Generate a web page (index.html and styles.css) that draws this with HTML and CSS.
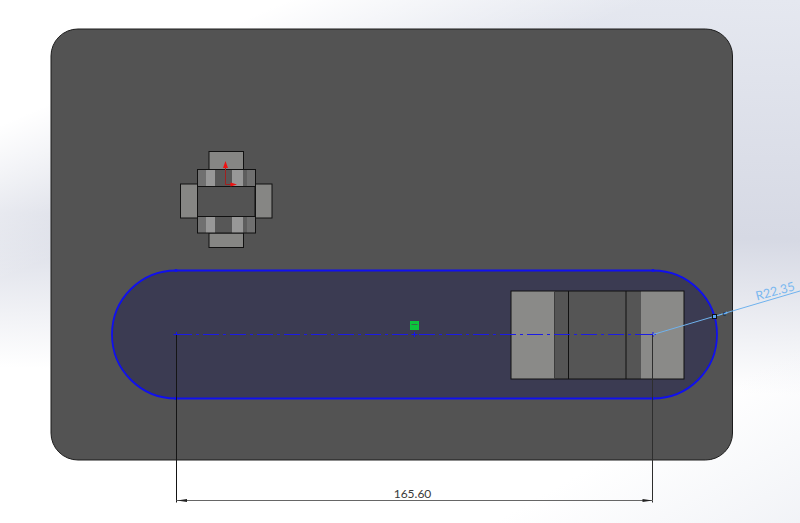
FILE: index.html
```html
<!DOCTYPE html>
<html lang="en">
<head>
    <meta charset="UTF-8">
    <meta name="viewport" content="width=device-width, initial-scale=1.0">
    <title>Sketch</title>
    <link rel="stylesheet" href="styles.css">
</head>
<body>
    <svg class="canvas" width="800" height="523" viewBox="0 0 800 523">
        <!-- plate -->
        <rect class="plate" x="51" y="29" width="681.500" height="431" rx="27"/>

        <!-- small part -->
        <rect class="tab" x="209" y="151.500" width="34.500" height="18"/>
        <rect class="tab" x="209" y="233" width="34.500" height="14.500"/>
        <rect class="tab" x="180.500" y="184" width="17" height="34"/>
        <rect class="tab" x="255" y="184" width="17" height="34"/>
        <g>
            <rect class="band-mid" x="198" y="170" width="8" height="16"/>
            <rect class="band-light" x="206" y="170" width="9" height="16"/>
            <rect class="band-dark" x="215" y="170" width="17" height="16"/>
            <rect class="band-light" x="232" y="170" width="11" height="16"/>
            <rect class="band-shade" x="243" y="170" width="4" height="16"/>
            <rect class="band-mid" x="247" y="170" width="8" height="16"/>
            <rect class="band-mid" x="198" y="217" width="8" height="16"/>
            <rect class="band-light" x="206" y="217" width="9" height="16"/>
            <rect class="band-dark" x="215" y="217" width="17" height="16"/>
            <rect class="band-light" x="232" y="217" width="11" height="16"/>
            <rect class="band-shade" x="243" y="217" width="4" height="16"/>
            <rect class="band-mid" x="247" y="217" width="8" height="16"/>
            <rect class="outline" x="197.500" y="169.500" width="58" height="63.500"/>
            <line class="edge" x1="197.500" y1="186.500" x2="255.500" y2="186.500"/>
            <line class="edge" x1="197.500" y1="216.500" x2="255.500" y2="216.500"/>
        </g>

        <!-- origin -->
        <path class="origin-line" d="M225.500 166V184.500H232"/>
        <path class="origin-head" d="M225.500 161l2.500 7h-5zM237 184.500l-6.500 2v-4z"/>

        <!-- slot -->
        <path class="slot" d="M176 270.500H653A64 64 0 0 1 653 398.500H176A64 64 0 0 1 176 270.500Z"/>

        <!-- block in the slot -->
        <rect class="block-light" x="511" y="291" width="173" height="88"/>
        <rect class="block-dark" x="554" y="291" width="87" height="88"/>
        <rect class="outline" x="511" y="291" width="173" height="88"/>
        <line class="edge-soft" x1="554.500" y1="291" x2="554.500" y2="379"/>
        <line class="edge" x1="568.500" y1="291" x2="568.500" y2="379"/>
        <line class="edge" x1="626" y1="291" x2="626" y2="379"/>

        <!-- slot again, the outline lies on top -->
        <path class="slot-line" d="M176 270.500H653A64 64 0 0 1 653 398.500H176A64 64 0 0 1 176 270.500Z"/>
        <line class="center-line" x1="176" y1="334.500" x2="653" y2="334.500"/>
        <path class="tick" d="M173.500 334.500h6M176.500 332v5M411.500 334.500h6M414.500 332v5M650 334.500h6M653 332v5"/>
        <circle class="dot" cx="176" cy="270.500" r="1.500"/>
        <circle class="dot" cx="653" cy="270.500" r="1.500"/>
        <circle class="dot" cx="176" cy="398.500" r="1.500"/>
        <circle class="dot" cx="653" cy="398.500" r="1.500"/>

        <!-- relation marker -->
        <rect class="relation" x="410" y="321" width="9" height="9"/>
        <line class="relation-bar" x1="411.500" y1="324.500" x2="417.500" y2="324.500"/>

        <!-- width dimension -->
        <line class="dim" x1="176.500" y1="335" x2="176.500" y2="502.500"/>
        <line class="dim-right" x1="652.500" y1="335" x2="652.500" y2="502.500"/>
        <line class="dim-thin" x1="176.500" y1="500.500" x2="653" y2="500.500"/>
        <path class="arrow" d="M177 500.500l10-1.500v3zM652.500 500.500l-10-1.500v3z"/>
        <text class="dim-text" x="412.500" y="498" text-anchor="middle">165.60</text>

        <!-- radius dimension -->
        <path class="radius-line" d="M653 334.500L800 291"/>
        <path class="radius-arrow" d="M715 316.500l12-5 .5 2z"/>
        <rect class="handle" x="712.500" y="314.500" width="4" height="4"/>
        <text class="radius-text" transform="translate(757 300.500) rotate(-15)">R22.35</text>
        <text class="radius-mark" x="722.500" y="315.500">c</text>
    </svg>
</body>
</html>
```

FILE: styles.css
```css
html, body {
    margin: 0;
    padding: 0;
}

body {
    width: 800px;
    height: 523px;
    overflow: hidden;
    background:
        linear-gradient(156.6deg, #ffffff 115px, rgba(255, 255, 255, 0) 258px),
        linear-gradient(150deg, rgba(238, 240, 245, 0) 82%, rgba(238, 240, 245, 0.8) 100%),
        linear-gradient(182deg, #e5e8f0 0, #d6d9e4 240px, #ffffff 395px);
}

.canvas {
    display: block;
}

.plate {
    fill: #535353;
    stroke: #1c1c1c;
    stroke-width: 1;
}

.tab {
    fill: #868684;
    stroke: #111;
    stroke-width: 1;
}

.band-light { fill: #989898; }
.band-dark { fill: #575757; }
.band-mid { fill: #707070; }
.band-shade { fill: #5e5e5e; }

.outline {
    fill: none;
    stroke: #111;
    stroke-width: 1;
}

.edge {
    stroke: #111;
    stroke-width: 1;
}

.edge-soft {
    stroke: #3c3c3c;
    stroke-width: 1;
}

.origin-line {
    fill: none;
    stroke: #a02020;
    stroke-width: 1;
}

.origin-head {
    fill: #f01010;
}

.slot {
    fill: #3b3b52;
}

.slot-line {
    fill: none;
    stroke: #1010ee;
    stroke-width: 1.800;
}

.block-light { fill: #8a8a88; }
.block-dark { fill: #555; }

.center-line {
    stroke: #1c1ce4;
    stroke-width: 1;
    stroke-dasharray: 16 4 3 4;
}

.tick {
    fill: none;
    stroke: #1414f0;
    stroke-width: 1;
}

.dot { fill: #1010ee; }

.relation { fill: #0cc53c; }

.relation-bar {
    stroke: #3b6a4b;
    stroke-width: 1;
}

.dim {
    stroke: #151515;
    stroke-width: 1;
}

.dim-right {
    stroke: #2e2e2e;
    stroke-width: 1;
}

.dim-thin {
    stroke: #666;
    stroke-width: 1;
}

.arrow { fill: #222; }

.dim-text {
    font-family: "Lato", "Liberation Sans", sans-serif;
    font-size: 12px;
    fill: #3a3a3a;
}

.radius-line {
    fill: none;
    stroke: #6fb2ee;
    stroke-width: 1;
}

.radius-arrow { fill: #6fb2ee; }

.handle {
    fill: #5aa8f5;
    stroke: #111;
    stroke-width: 1;
}

.radius-text {
    font-family: "Lato", "Liberation Sans", sans-serif;
    font-size: 12.500px;
    fill: #7ab8f0;
}

.radius-mark {
    font-family: "Lato", "Liberation Sans", sans-serif;
    font-size: 7px;
    font-weight: 700;
    fill: #14304a;
}
```
